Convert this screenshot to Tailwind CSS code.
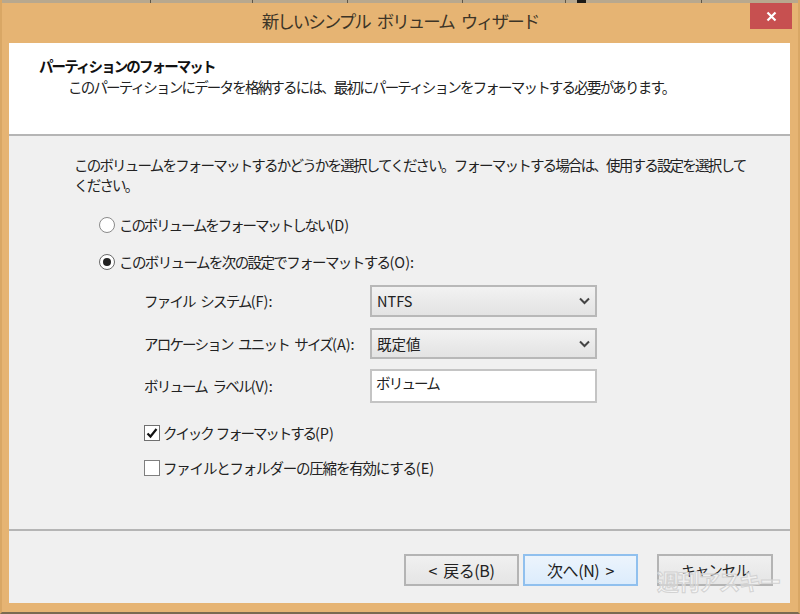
<!DOCTYPE html>
<html lang="ja">
<head>
    <meta charset="UTF-8">
    <title>新しいシンプル ボリューム ウィザード</title>
    <script src="https://cdn.jsdelivr.net/npm/@tailwindcss/browser@4"></script>
</head>
<body class="w-[800px] h-[614px] overflow-hidden bg-[#e6b473] font-['Noto_Sans_CJK_JP','Noto_Sans',sans-serif] text-[14.5px] tracking-[-1.8px] [word-spacing:4px] text-[#222]">
    <div class="relative w-[800px] h-[614px] flex flex-col border-x-2 border-b-2 border-x-[#d9a765] border-b-[#7a6a50]">
        <!-- strip of the window behind -->
        <div class="h-[3px] bg-[#b8a88e] shrink-0 flex">
            <span class="ml-[148px] w-[1px] bg-[#5f5647]"></span>
            <span class="ml-[101px] w-[1px] bg-[#5f5647]"></span>
            <span class="ml-[94px] w-[1px] bg-[#5f5647]"></span>
            <span class="ml-[114px] w-[1px] bg-[#5f5647]"></span>
            <span class="ml-[102px] w-[1px] bg-[#5f5647]"></span>
            <span class="ml-[11px] w-[9px] bg-[#1c1a16]"></span>
            <span class="ml-[115px] w-[1px] bg-[#5f5647]"></span>
        </div>

        <!-- title bar -->
        <div class="relative h-[40px] shrink-0 flex items-center justify-center">
            <span class="text-[17.5px] tracking-[-2px] [word-spacing:5px] text-[#3c3427] pb-[4px]">新しいシンプル ボリューム ウィザード</span>
            <div class="absolute right-[6px] top-0 w-[42px] h-[26px] bg-[#c75050] flex items-center justify-center">
                <svg width="11" height="11" viewBox="0 0 11 11"><path d="M1.5 1.5 9.5 9.5M9.5 1.5 1.5 9.5" stroke="#fff" stroke-width="2.2" fill="none"/></svg>
            </div>
        </div>

        <div class="ml-[7px] mr-[8px] h-[560px] flex flex-col bg-[#f0f0f0] shrink-0">
            <!-- header -->
            <div class="h-[93px] shrink-0 bg-white border-b-2 border-[#b5b5b5] pl-[30px] pt-[12px]">
                <div class="h-[21px] leading-[21px] font-bold tracking-[-1.9px] text-[#111]">パーティションのフォーマット</div>
                <div class="h-[22px] leading-[22px] pl-[29px] whitespace-nowrap">このパーティションにデータを格納するには、最初にパーティションをフォーマットする必要があります。</div>
            </div>

            <!-- body -->
            <div class="h-[395px] shrink-0 border-b-2 border-[#b5b5b5] pl-[65px] pt-[19px]">
                <p class="leading-[20px] whitespace-nowrap">このボリュームをフォーマットするかどうかを選択してください。フォーマットする場合は、使用する設定を選択して<br>ください。</p>

                <div class="pl-[25px] mt-[20px] flex flex-col gap-[17px]">
                    <div class="h-[20px] flex items-center gap-[4px]">
                        <span class="w-[16px] h-[16px] rounded-full border border-[#8a8a8a] bg-white"></span>
                        <span class="tracking-[-2.1px]">このボリュームをフォーマットしない<span class="tracking-normal">(D)</span></span>
                    </div>
                    <div class="h-[20px] flex items-center gap-[4px]">
                        <span class="w-[16px] h-[16px] rounded-full border border-[#6a6a6a] bg-white flex items-center justify-center">
                            <span class="w-[8px] h-[8px] rounded-full bg-[#222]"></span>
                        </span>
                        <span class="tracking-[-1.6px]">このボリュームを次の設定でフォーマットする<span class="tracking-normal">(O):</span></span>
                    </div>
                </div>

                <div class="pl-[70px] mt-[13px] grid grid-cols-[226px_227px] gap-y-[11px]">
                    <div class="h-[32px] flex items-center whitespace-nowrap"><span>ファイル システム<span class="tracking-normal">(F):</span></span></div>
                    <div class="h-[32px] flex items-center justify-between pl-[5px] pr-[5px] border-2 border-[#b8b8b8] bg-gradient-to-b from-[#f2f2f2] to-[#e3e3e3] tracking-normal">
                        <span>NTFS</span>
                        <svg width="11" height="8" viewBox="0 0 11 8"><path d="M1 1.500 5.500 6 10 1.500" stroke="#444" stroke-width="2" fill="none"/></svg>
                    </div>
                    <div class="h-[31px] flex items-center whitespace-nowrap"><span>アロケーション ユニット サイズ<span class="tracking-normal">(A):</span></span></div>
                    <div class="h-[31px] flex items-center justify-between pl-[5px] pr-[5px] border-2 border-[#b8b8b8] bg-gradient-to-b from-[#f2f2f2] to-[#e3e3e3] tracking-normal">
                        <span>既定値</span>
                        <svg width="11" height="8" viewBox="0 0 11 8"><path d="M1 1.500 5.500 6 10 1.500" stroke="#444" stroke-width="2" fill="none"/></svg>
                    </div>
                    <div class="h-[34px] -mt-[1px] flex items-center whitespace-nowrap"><span>ボリューム ラベル<span class="tracking-normal">(V):</span></span></div>
                    <div class="h-[34px] -mt-[1px] pl-[4px] pt-[2px] leading-[20px] border-2 border-[#c4c4c4] bg-white">ボリューム</div>
                </div>

                <div class="pl-[70px] mt-[20px] flex flex-col gap-[15px]">
                    <div class="h-[20px] flex items-center gap-[3px]">
                        <span class="w-[16px] h-[16px] border border-[#6f6f6f] bg-white flex items-center justify-center">
                            <svg width="12" height="12" viewBox="0 0 12 12"><path d="M1.500 6.500 4.500 9.500 10.500 2" stroke="#111" stroke-width="2.200" fill="none"/></svg>
                        </span>
                        <span class="tracking-[-2.100px] [word-spacing:2px]">クイック フォーマットする<span class="tracking-normal">(P)</span></span>
                    </div>
                    <div class="h-[20px] flex items-center gap-[3px]">
                        <span class="w-[16px] h-[16px] border border-[#7f7f7f] bg-white"></span>
                        <span class="tracking-[-1.200px]">ファイルとフォルダーの圧縮を有効にする<span class="tracking-normal">(E)</span></span>
                    </div>
                </div>
            </div>

            <!-- footer -->
            <div class="flex-1 pt-[23px] pl-[395px] flex gap-[4px]">
                <button class="w-[115px] h-[32px] border-2 border-[#b4b4b4] bg-gradient-to-b from-[#f0f0f0] to-[#e5e5e5] text-[16px] tracking-[-0.4px] [word-spacing:3px]">&lt; 戻る(B)</button>
                <button class="w-[115px] h-[32px] border-2 border-[#90c0ee] bg-gradient-to-b from-[#ecf4fc] to-[#dcecfc] text-[16px] tracking-[-0.4px] [word-spacing:3px]">次へ(N) &gt;</button>
                <button class="ml-[15px] w-[116px] h-[32px] border-2 border-[#b4b4b4] bg-gradient-to-b from-[#f0f0f0] to-[#e5e5e5] tracking-[-1px]">キャンセル</button>
            </div>
        </div>

        <!-- watermark -->
        <div class="absolute left-[655px] top-[565px] text-[22px] font-bold leading-[30px] tracking-[-1.500px] text-white/40 [-webkit-text-stroke:1px_#d2d2d2] whitespace-nowrap">週刊アスキー</div>
    </div>
</body>
</html>
